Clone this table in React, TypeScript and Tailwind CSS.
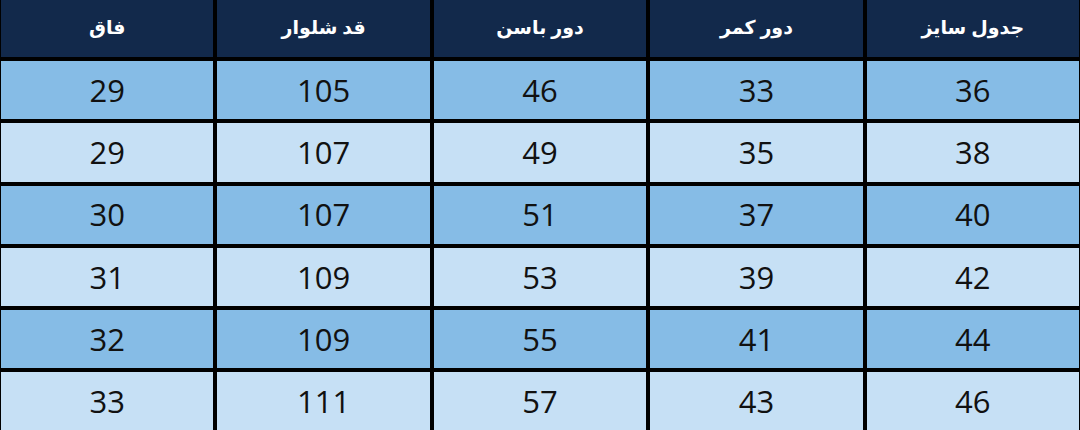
const headers = ["جدول سایز", "دور کمر", "دور باسن", "قد شلوار", "فاق"];

const rows = [
  [36, 33, 46, 105, 29],
  [38, 35, 49, 107, 29],
  [40, 37, 51, 107, 30],
  [42, 39, 53, 109, 31],
  [44, 41, 55, 109, 32],
  [46, 43, 57, 111, 33],
];

export default function App() {
  return (
    <main
      dir="rtl"
      className="w-[1080px] h-[430px] overflow-hidden bg-black font-['Open_Sans','DejaVu_Sans',sans-serif]"
    >
      <div className="grid grid-cols-5 grid-rows-[57px_repeat(6,58.3px)] gap-x-[4px] gap-y-[4px] px-[1px]">
        {headers.map((h) => (
          <div
            key={h}
            className="flex items-center justify-center pb-[3px] bg-[#12294b] text-[19px] font-bold text-white"
          >
            {h}
          </div>
        ))}
        {rows.map((row, i) =>
          row.map((v, j) => (
            <div
              key={`${i}-${j}`}
              className={`flex items-center justify-center text-[31px] text-[#111] ${
                i % 2 === 0 ? "bg-[#86bce6]" : "bg-[#c6e0f5]"
              }`}
            >
              {v}
            </div>
          ))
        )}
      </div>
    </main>
  );
}
